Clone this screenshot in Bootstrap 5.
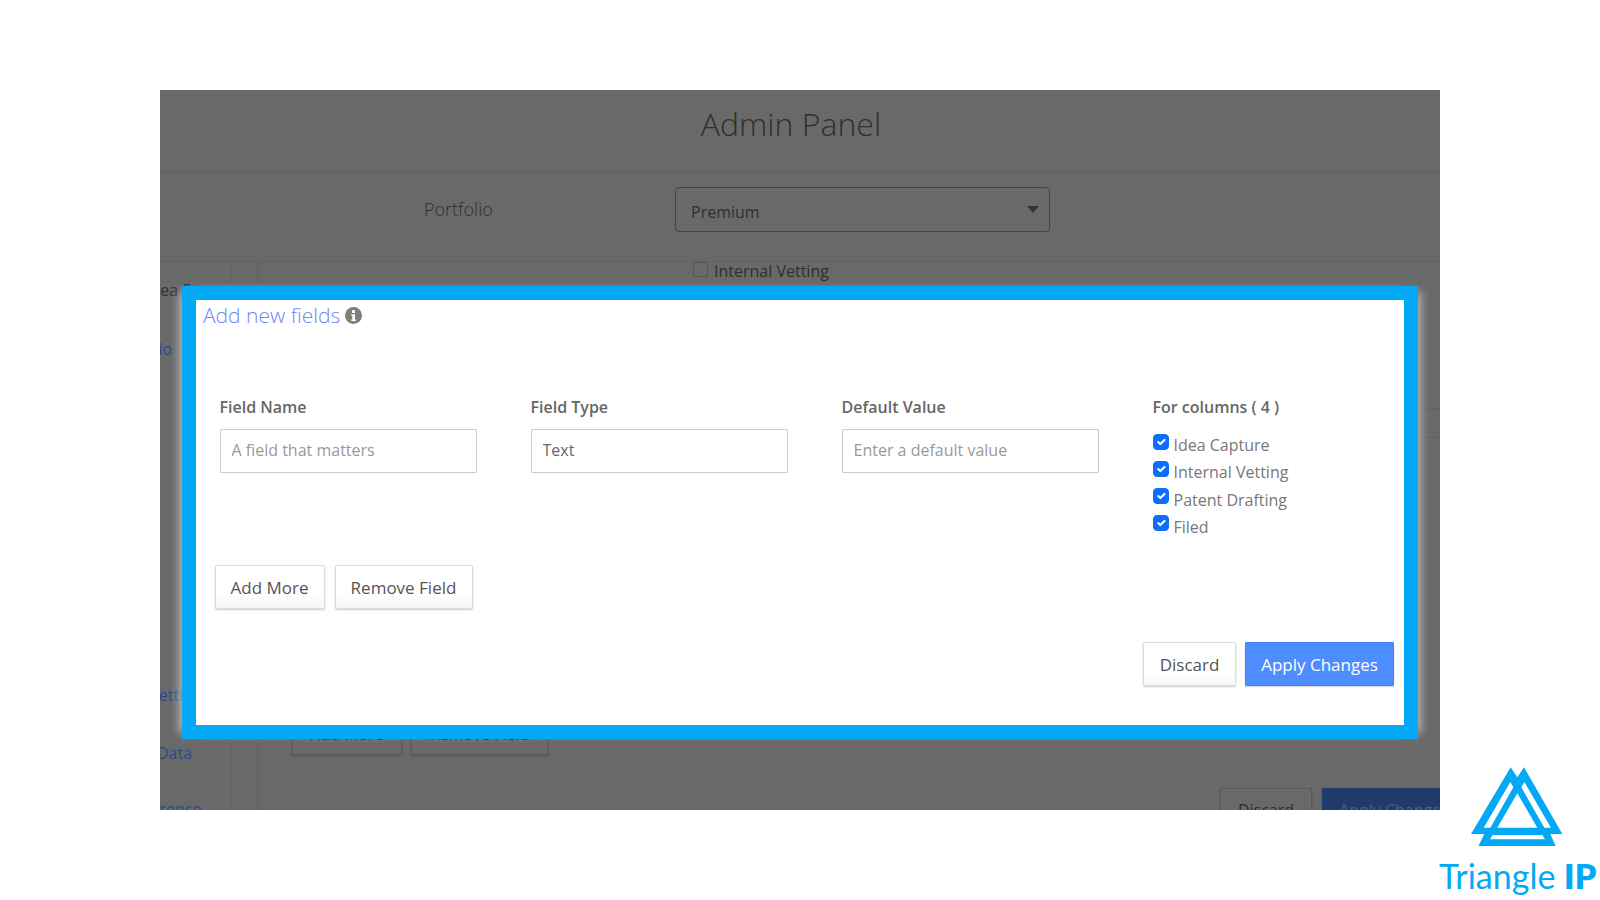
<!DOCTYPE html>
<html lang="en">
<head>
<meta charset="utf-8">
<title>Admin Panel</title>
<link href="https://cdn.jsdelivr.net/npm/bootstrap@5.3.0/dist/css/bootstrap.min.css" rel="stylesheet">
<style>
html,body{height:900px;overflow:hidden;background:#fff}
body{font-family:"Open Sans","Liberation Sans",sans-serif;font-size:16px;color:#666}
.slide{width:1600px;height:900px;padding:90px 0 0 160px}
.shot{width:1280px;height:720px;background:#696969;color:#333;overflow:hidden;flex:none}
.shot-head{height:83px;flex:none;border-bottom:1px solid #626262;padding:0 18px 13px 0}
.shot-title{font-size:32px;font-weight:300;margin:0;color:#2f2f2f;line-height:1.2}
.shot-port{height:89px;flex:none;border-bottom:1px solid #626262;padding:14px 0 29px 264px}
.port-label{width:251px;font-size:18px;font-weight:300;color:#2f2f2f}
.port-select{width:375px;height:45px;background-color:transparent;border:1px solid #444;border-radius:4px;color:#2f2f2f;font-size:16px;padding:4px 0 0 15px;background-size:12px 7px;background-position:right 10px center;background-image:url("data:image/svg+xml,%3Csvg xmlns='http://www.w3.org/2000/svg' viewBox='0 0 12 7'%3E%3Cpath d='M0 0h12L6 7z' fill='%23333'/%3E%3C/svg%3E")}
.shot-side{width:98px;border-right:1px solid #626262;flex:none;overflow:hidden}
.side-inner{width:72px;border-right:1px solid #646464;height:100%}
.side-row{height:56px;line-height:56px;white-space:nowrap;color:#2c4a85}
.side-line{border-bottom:1px solid #646464;color:#333;height:57px}
.si-a{margin-left:-14px}.si-b{margin-left:-52px;line-height:60px}.si-c{margin-left:-10px;line-height:52px}.si-d{margin-left:-3px}.si-e{margin-left:-40px}
.side-gap{height:294px}
.back-check{margin:0 0 0 435px;height:22px;color:#2f2f2f;line-height:18px}
.back-box{width:15px;height:15px;border:1px solid #555;border-radius:2px;margin-right:6px;flex:none}
.back-rule{height:30px;margin-top:124px;border-top:1px solid #626262;border-bottom:1px solid #626262}
.back-btn{height:43px;border:1px solid #5a5a5a;color:#2f2f2f;box-shadow:0 1px 2px #555}
.back-row-a{margin:274px 0 0 34px;gap:9px}
.back-row-b{margin-top:33px;gap:10px}
.bb-1{width:110px}.bb-2{width:137px}.bb-3{width:92px}.bb-4{width:118px;background:#203a6b;border-color:#203a6b;color:#47608f;white-space:nowrap;overflow:hidden;justify-content:flex-start;padding-left:16px}
.new-modal{left:22px;top:196px;width:1236px;height:453px;background:#fff;border:14px solid #03a9f4;box-shadow:9px 0 9px -6px rgba(205,205,205,.8),-9px 0 9px -6px rgba(205,205,205,.8);padding:0 0 0 7px}
.new-title{font-size:21px;font-weight:300;color:#6f83fa;line-height:30px;margin:0 0 65px}
.info-ico{width:17px;height:17px;margin-left:5px}
.field-row{padding-left:16.5px;height:170px}
.field-col{width:311px;flex:none}
.field-col label,.col-title{font-weight:600;color:#666;line-height:24px;margin-bottom:10px;display:block}
.field-col .col-title{margin-bottom:14px}
.field-in{width:257.5px;height:44px;border:1px solid #ccc;border-radius:1px;color:#666;font-size:16px;padding:0 11px 2px}
.field-in::placeholder{color:#999;opacity:1}
.field-col .col-check{display:flex;align-items:flex-start;height:27.3px;margin:0;font-weight:400}
.col-check input{width:16px;height:16px;margin:.5px 5px 0 0;border-radius:3px;background-color:#1e7de6;border-color:#1e7de6;flex:none}
.col-check span{line-height:24px;margin-top:0;color:#777}
.act-btn{height:44px;background:linear-gradient(#fff 70%,#f6f6f6);border:1px solid #ddd;border-radius:1px;color:#555;box-shadow:0 1px 2px #ccc;font-size:17px;line-height:1}
.act-row{padding-left:11.5px;gap:10px}
.ab-1{width:110px}.ab-2{width:138px}.ab-3{width:93px}
.ab-4{width:149px;background:#4d8dff;border-color:#4583f0;color:#fff}
.end-row{margin-top:33px;padding-right:10px;gap:9px}
.logo-col{width:154px;margin:670px 0 0 -1px;flex:none}
.logo-svg{width:105px;height:92px;display:block;margin:0 0 0 26px}
.logo-word{font-family:Lato,"Open Sans",sans-serif;font-size:34px;line-height:40px;color:#03a9f4;white-space:nowrap;margin-top:4px}
.logo-word b{font-weight:800}
</style>
</head>
<body>
<div class="slide d-flex align-items-start">
  <div class="shot d-flex flex-column position-relative">
    <div class="shot-head d-flex align-items-center justify-content-center"><h1 class="shot-title">Admin Panel</h1></div>
    <div class="shot-port d-flex align-items-center">
      <div class="port-label">Portfolio</div>
      <select class="form-select port-select"><option>Premium</option></select>
    </div>
    <div class="d-flex flex-grow-1">
      <div class="shot-side">
        <div class="side-inner">
          <div class="side-row side-line"><span class="d-block si-a">Idea F</span></div>
          <div class="side-row"><span class="d-block si-b">Portfolio</span></div>
          <div class="side-gap"></div>
          <div class="side-row"><span class="d-block si-c">Settings</span></div>
          <div class="side-row"><span class="d-block si-d">Data</span></div>
          <div class="side-row"><span class="d-block si-e">Preference</span></div>
        </div>
      </div>
      <div class="flex-grow-1">
        <div class="back-check d-flex align-items-start"><span class="back-box"></span><span>Internal Vetting</span></div>
        <div class="back-rule"></div>
        <div class="back-row-a d-flex">
          <div class="back-btn bb-1 d-flex align-items-center justify-content-center">Add More</div>
          <div class="back-btn bb-2 d-flex align-items-center justify-content-center">Remove Field</div>
        </div>
        <div class="back-row-b d-flex justify-content-end">
          <div class="back-btn bb-3 d-flex align-items-center justify-content-center">Discard</div>
          <div class="back-btn bb-4 d-flex align-items-center">Apply Changes</div>
        </div>
      </div>
    </div>

    <div class="new-modal position-absolute">
      <h2 class="new-title d-flex align-items-center">Add new fields
        <svg class="info-ico" viewBox="0 0 17 17"><circle cx="8.5" cy="8.5" r="8.5" fill="#7f7f77"/><rect x="7" y="3" width="3" height="3" rx=".6" fill="#fff"/><path d="M6.3 7.2h3.7v5.2h1v1.5H6.3v-1.5h1V8.7h-1z" fill="#fff"/></svg>
      </h2>
      <div class="field-row d-flex">
        <div class="field-col"><label for="f1">Field Name</label><input id="f1" class="form-control field-in" placeholder="A field that matters"></div>
        <div class="field-col"><label for="f2">Field Type</label><input id="f2" class="form-control field-in" value="Text"></div>
        <div class="field-col"><label for="f3">Default Value</label><input id="f3" class="form-control field-in" placeholder="Enter a default value"></div>
        <div class="field-col">
          <div class="col-title">For columns ( 4 )</div>
          <label class="col-check"><input class="form-check-input" type="checkbox" checked><span>Idea Capture</span></label>
          <label class="col-check"><input class="form-check-input" type="checkbox" checked><span>Internal Vetting</span></label>
          <label class="col-check"><input class="form-check-input" type="checkbox" checked><span>Patent Drafting</span></label>
          <label class="col-check"><input class="form-check-input" type="checkbox" checked><span>Filed</span></label>
        </div>
      </div>
      <div class="act-row d-flex">
        <button class="btn act-btn ab-1 p-0">Add More</button>
        <button class="btn act-btn ab-2 p-0">Remove Field</button>
      </div>
      <div class="end-row d-flex justify-content-end">
        <button class="btn act-btn ab-3 p-0">Discard</button>
        <button class="btn act-btn ab-4 p-0">Apply Changes</button>
      </div>
    </div>
  </div>
  <div class="logo-col">
    <svg class="logo-svg" viewBox="0 0 315 276"><path fill="#03a9f4" fill-rule="evenodd" d="M137 22L157 52L177 22L292 222H256L272 258H40L58 222H18ZM157 100L97 203H217ZM136 66L56 203H76L145 82ZM178 66L258 203H238L169 82ZM83 225H232L240 238H75Z"/></svg>
    <div class="logo-word">Triangle <b>IP</b></div>
  </div>
</div>
<script src="https://cdn.jsdelivr.net/npm/bootstrap@5.3.0/dist/js/bootstrap.bundle.min.js"></script>
</body>
</html>
